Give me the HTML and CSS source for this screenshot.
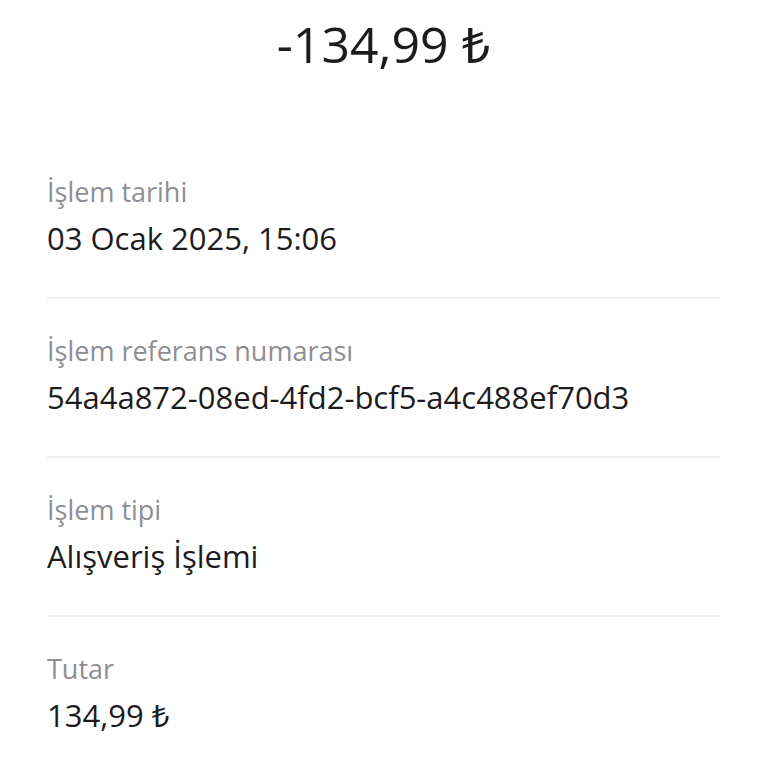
FILE: index.html
```html
<!DOCTYPE html>
<html lang="tr">
<head>
    <meta charset="UTF-8">
    <meta name="viewport" content="width=device-width, initial-scale=1.0">
    <title>İşlem detayı</title>
    <link rel="stylesheet" href="styles.css">
</head>
<body>
    <div class="detail">
        <h1 class="amount">-134,99 ₺</h1>

        <div class="rows">
            <div class="row">
                <p class="label">İşlem tarihi</p>
                <p class="value">03 Ocak 2025, 15:06</p>
            </div>
            <div class="row">
                <p class="label">İşlem referans numarası</p>
                <p class="value">54a4a872-08ed-4fd2-bcf5-a4c488ef70d3</p>
            </div>
            <div class="row">
                <p class="label">İşlem tipi</p>
                <p class="value">Alışveriş İşlemi</p>
            </div>
            <div class="row">
                <p class="label">Tutar</p>
                <p class="value">134,99 ₺</p>
            </div>
        </div>
    </div>
</body>
</html>
```

FILE: styles.css
```css
/* Estilo global */
* {
    margin: 0;
    padding: 0;
    box-sizing: border-box;
}

body {
    font-family: "Open Sans", "Noto Sans", sans-serif;
    background-color: #fff;
    color: #1c1c1e;
}

/* Contenedor */
.detail {
    padding: 0 48px 0 47px;
}

/* Monto */
.amount {
    text-align: center;
    font-size: 50px;
    font-weight: 400;
    line-height: 60px;
    padding-top: 14px;
    margin-bottom: 84px;
}

/* Filas */
.row {
    padding: 16px 0 39px;
    border-bottom: 2px solid #f0f0f0;
    margin-bottom: 18px;
}

.row:last-child {
    border-bottom: none;
}

.label {
    font-size: 27px;
    line-height: 36px;
    color: #8e8e93;
    margin-bottom: 8px;
}

.value {
    font-size: 31px;
    line-height: 40px;
}
```
